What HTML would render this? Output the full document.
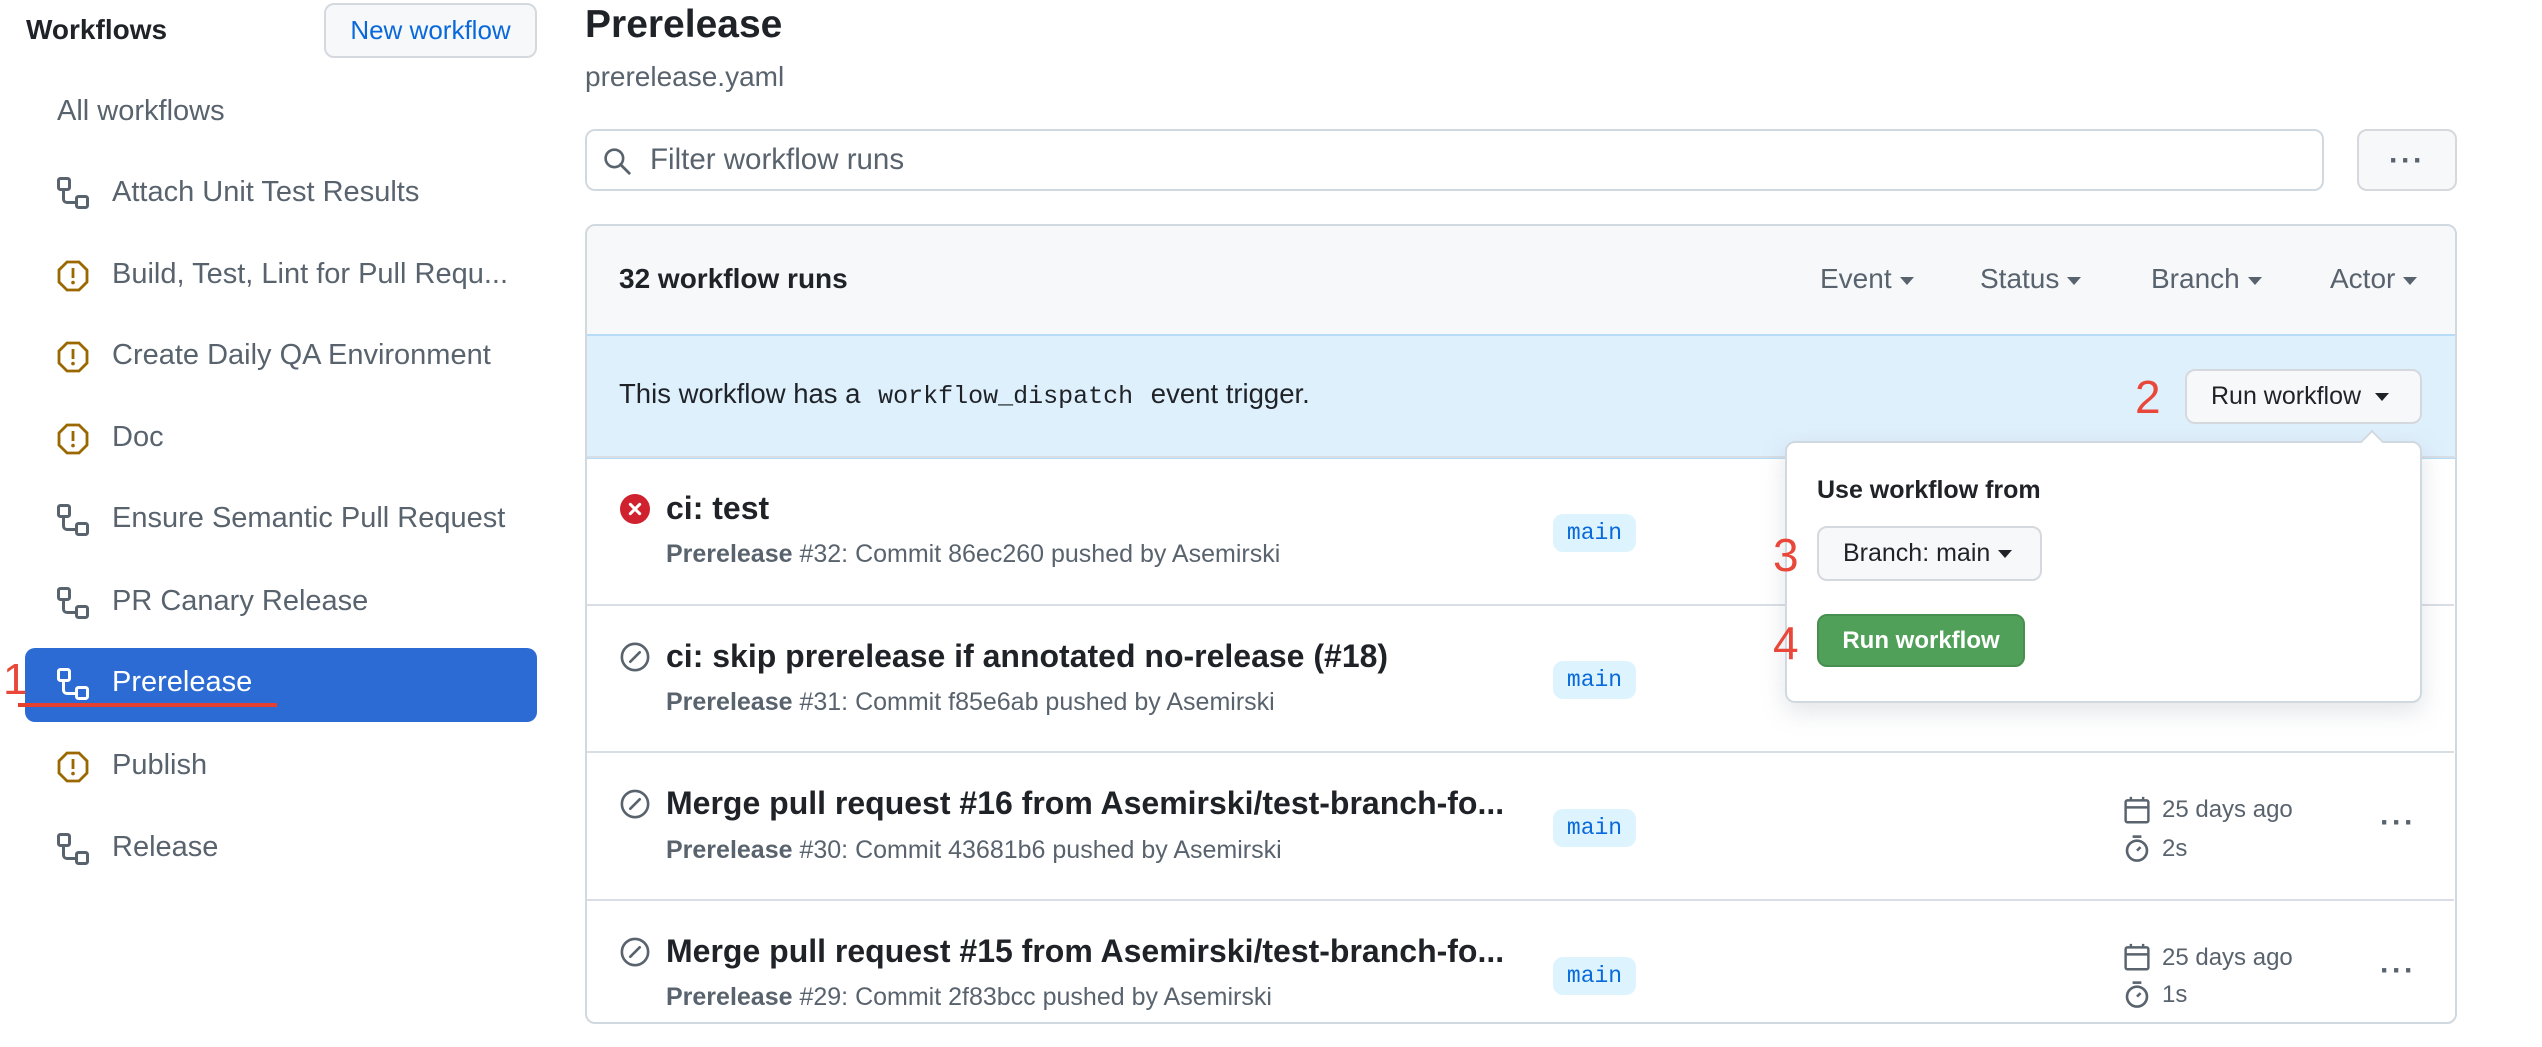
<!DOCTYPE html>
<html><head><meta charset="utf-8"><style>
*{box-sizing:border-box;margin:0;padding:0}
body{width:2542px;height:1002px;overflow:hidden;background:#fff;font-family:"Liberation Sans",Arial,sans-serif;color:#1f2328;position:relative}
.a{position:absolute;white-space:nowrap}
.side{font-size:29px;color:#59636e}
.ic{position:absolute;width:32px;height:32px}
.btn{position:absolute;border:2px solid #d5d9de;border-radius:10px;background:#f6f8fa}
.caret{display:inline-block;width:0;height:0;border-left:7px solid transparent;border-right:7px solid transparent;border-top:8px solid #59636e;vertical-align:middle;margin-left:8px}
.row{position:absolute;left:587px;width:1867px;height:148px;border-top:2px solid #d8dee4}
.t{font-size:32px;font-weight:bold;color:#1f2328}
.s{font-size:25px;color:#59636e}
.badge{position:absolute;left:1553px;width:83px;height:38px;background:#ddf4ff;border-radius:10px;color:#0969da;font-family:"Liberation Mono",monospace;font-size:23px;text-align:center;line-height:38px}
.meta{font-size:24px;color:#59636e}
.num{position:absolute;color:#e8473a;font-size:46px;font-family:"Liberation Sans",sans-serif}
.dots{position:absolute;font-size:30px;color:#59636e;letter-spacing:2px;font-weight:bold}
</style></head><body>
<svg width="0" height="0" style="position:absolute"><defs>
<path id="wf" d="M0 1.750C0 .784.784 0 1.75 0h3.5C6.216 0 7 .784 7 1.75v3.5A1.75 1.75 0 0 1 5.25 7H4v4a1 1 0 0 0 1 1h4v-1.25C9 9.784 9.784 9 10.75 9h3.5c.966 0 1.75.784 1.75 1.75v3.5A1.75 1.75 0 0 1 14.25 16h-3.5A1.75 1.75 0 0 1 9 14.25v-.75H5A2.5 2.5 0 0 1 2.5 11V7h-.75A1.75 1.75 0 0 1 0 5.25Zm1.75-.25a.25.25 0 0 0-.25.25v3.5c0 .138.112.25.25.25h3.5a.25.25 0 0 0 .25-.25v-3.5a.25.25 0 0 0-.25-.25Zm9 9a.25.25 0 0 0-.25.25v3.5c0 .138.112.25.25.25h3.5a.25.25 0 0 0 .25-.25v-3.5a.25.25 0 0 0-.25-.25Z"/>
</defs></svg>

<div class="a" style="left:26px;top:14px;font-size:28px;font-weight:bold">Workflows</div>
<div class="btn" style="left:324px;top:3px;width:213px;height:55px;color:#0969da;font-size:26px;text-align:center;line-height:51px">New workflow</div>
<div class="a side" style="left:57px;top:95px">All workflows</div>

<svg class="ic" style="left:57px;top:177px" viewBox="0 0 16 16" fill="#59636e"><use href="#wf"/></svg>
<div class="a side" style="left:112px;top:176px">Attach Unit Test Results</div>

<svg class="ic" style="left:57px;top:260px" viewBox="0 0 16 16"><polygon points="5,1 11,1 15,5 15,11 11,15 5,15 1,11 1,5" fill="none" stroke="#9a6700" stroke-width="1.4"/><rect x="7.3" y="4" width="1.4" height="5" fill="#9a6700"/><circle cx="8" cy="11.3" r=".9" fill="#9a6700"/></svg>
<div class="a side" style="left:112px;top:258px">Build, Test, Lint for Pull Requ...</div>

<svg class="ic" style="left:57px;top:341px" viewBox="0 0 16 16"><polygon points="5,1 11,1 15,5 15,11 11,15 5,15 1,11 1,5" fill="none" stroke="#9a6700" stroke-width="1.4"/><rect x="7.3" y="4" width="1.4" height="5" fill="#9a6700"/><circle cx="8" cy="11.3" r=".9" fill="#9a6700"/></svg>
<div class="a side" style="left:112px;top:339px">Create Daily QA Environment</div>

<svg class="ic" style="left:57px;top:423px" viewBox="0 0 16 16"><polygon points="5,1 11,1 15,5 15,11 11,15 5,15 1,11 1,5" fill="none" stroke="#9a6700" stroke-width="1.4"/><rect x="7.3" y="4" width="1.4" height="5" fill="#9a6700"/><circle cx="8" cy="11.3" r=".9" fill="#9a6700"/></svg>
<div class="a side" style="left:112px;top:421px">Doc</div>

<svg class="ic" style="left:57px;top:504px" viewBox="0 0 16 16" fill="#59636e"><use href="#wf"/></svg>
<div class="a side" style="left:112px;top:502px">Ensure Semantic Pull Request</div>

<svg class="ic" style="left:57px;top:587px" viewBox="0 0 16 16" fill="#59636e"><use href="#wf"/></svg>
<div class="a side" style="left:112px;top:585px">PR Canary Release</div>

<div class="a" style="left:25px;top:648px;width:512px;height:74px;background:#2b6bd3;border-radius:10px"></div>
<svg class="ic" style="left:57px;top:668px" viewBox="0 0 16 16" fill="#fff"><use href="#wf"/></svg>
<div class="a side" style="left:112px;top:666px;color:#fff">Prerelease</div>
<div class="a" style="left:18px;top:703px;width:259px;height:4px;background:#e5402f"></div>
<div class="num" style="left:3px;top:655px;font-size:44px">1</div>

<svg class="ic" style="left:57px;top:751px" viewBox="0 0 16 16"><polygon points="5,1 11,1 15,5 15,11 11,15 5,15 1,11 1,5" fill="none" stroke="#9a6700" stroke-width="1.4"/><rect x="7.3" y="4" width="1.4" height="5" fill="#9a6700"/><circle cx="8" cy="11.3" r=".9" fill="#9a6700"/></svg>
<div class="a side" style="left:112px;top:749px">Publish</div>

<svg class="ic" style="left:57px;top:833px" viewBox="0 0 16 16" fill="#59636e"><use href="#wf"/></svg>
<div class="a side" style="left:112px;top:831px">Release</div>

<div class="a" style="left:585px;top:3px;font-size:39px;font-weight:bold">Prerelease</div>
<div class="a" style="left:585px;top:61px;font-size:28px;color:#59636e">prerelease.yaml</div>

<div class="a" style="left:585px;top:129px;width:1739px;height:62px;border:2px solid #d1d9e0;border-radius:10px"></div>
<svg class="a" style="left:603px;top:147px" width="28" height="28" viewBox="0 0 16 16"><circle cx="6.5" cy="6.5" r="5" fill="none" stroke="#59636e" stroke-width="1.5"/><line x1="10" y1="10" x2="15" y2="15" stroke="#59636e" stroke-width="1.6" stroke-linecap="round"/></svg>
<div class="a" style="left:650px;top:143px;font-size:29.5px;color:#59636e">Filter workflow runs</div>
<div class="btn" style="left:2357px;top:129px;width:100px;height:62px"></div>
<div class="dots" style="left:2389px;top:144px">···</div>

<div class="a" style="left:585px;top:224px;width:1872px;height:800px;border:2px solid #d1d9e0;border-radius:10px;overflow:hidden">
 <div style="position:absolute;left:0;top:0;width:100%;height:108px;background:#f6f8fa"></div>
 <div style="position:absolute;left:0;top:108px;width:100%;height:125px;background:#dff0fd;border-top:2px solid #b6dcf8;border-bottom:2px solid #b6dcf8"></div>
</div>
<div class="a" style="left:619px;top:263px;font-size:28px;font-weight:bold">32 workflow runs</div>
<div class="a" style="left:1820px;top:263px;font-size:28px;color:#59636e">Event<span class="caret"></span></div>
<div class="a" style="left:1980px;top:263px;font-size:28px;color:#59636e">Status<span class="caret"></span></div>
<div class="a" style="left:2151px;top:263px;font-size:28px;color:#59636e">Branch<span class="caret"></span></div>
<div class="a" style="left:2330px;top:263px;font-size:28px;color:#59636e">Actor<span class="caret"></span></div>

<div class="a" style="left:619px;top:378px;font-size:27.5px">This workflow has a <span style="font-family:'Liberation Mono',monospace;font-size:25px;padding:0 10px">workflow_dispatch</span> event trigger.</div>
<div class="num" style="left:2135px;top:370px">2</div>
<div class="btn" style="left:2185px;top:369px;width:237px;height:55px;font-size:25px;line-height:51px;padding-left:24px">Run workflow<span class="caret" style="margin-left:14px;border-top-color:#1f2328"></span></div>

<div class="row" style="top:456px"></div>
<div class="row" style="top:604px"></div>
<div class="row" style="top:751px"></div>
<div class="row" style="top:899px"></div>

<svg class="a" style="left:620px;top:494px" width="30" height="30" viewBox="0 0 16 16"><circle cx="8" cy="8" r="8" fill="#cf222e"/><path d="M5.5 5.5l5 5M10.5 5.5l-5 5" stroke="#fff" stroke-width="1.6" stroke-linecap="round"/></svg>
<div class="a t" style="left:666px;top:490px">ci: test</div>
<div class="a s" style="left:666px;top:540px"><b>Prerelease</b> #32: Commit 86ec260 pushed by Asemirski</div>
<div class="badge" style="top:514px">main</div>

<svg class="a" style="left:620px;top:642px" width="30" height="30" viewBox="0 0 16 16"><circle cx="8" cy="8" r="7" fill="none" stroke="#59636e" stroke-width="1.4"/><line x1="5.5" y1="10.5" x2="10.5" y2="5.5" stroke="#59636e" stroke-width="1.4" stroke-linecap="round"/></svg>
<div class="a t" style="left:666px;top:638px">ci: skip prerelease if annotated no-release (#18)</div>
<div class="a s" style="left:666px;top:688px"><b>Prerelease</b> #31: Commit f85e6ab pushed by Asemirski</div>
<div class="badge" style="top:661px">main</div>

<svg class="a" style="left:620px;top:789px" width="30" height="30" viewBox="0 0 16 16"><circle cx="8" cy="8" r="7" fill="none" stroke="#59636e" stroke-width="1.4"/><line x1="5.5" y1="10.5" x2="10.5" y2="5.5" stroke="#59636e" stroke-width="1.4" stroke-linecap="round"/></svg>
<div class="a t" style="left:666px;top:785px">Merge pull request #16 from Asemirski/test-branch-fo...</div>
<div class="a s" style="left:666px;top:836px"><b>Prerelease</b> #30: Commit 43681b6 pushed by Asemirski</div>
<div class="badge" style="top:809px">main</div>

<svg class="a" style="left:620px;top:937px" width="30" height="30" viewBox="0 0 16 16"><circle cx="8" cy="8" r="7" fill="none" stroke="#59636e" stroke-width="1.4"/><line x1="5.5" y1="10.5" x2="10.5" y2="5.5" stroke="#59636e" stroke-width="1.4" stroke-linecap="round"/></svg>
<div class="a t" style="left:666px;top:933px">Merge pull request #15 from Asemirski/test-branch-fo...</div>
<div class="a s" style="left:666px;top:983px"><b>Prerelease</b> #29: Commit 2f83bcc pushed by Asemirski</div>
<div class="badge" style="top:957px">main</div>

<svg class="a" style="left:2123px;top:796px" width="28" height="28" viewBox="0 0 16 16"><rect x="1.5" y="2.5" width="13" height="12.5" rx="1" fill="none" stroke="#59636e" stroke-width="1.4"/><line x1="1.5" y1="6.5" x2="14.5" y2="6.5" stroke="#59636e" stroke-width="1.4"/><line x1="4.5" y1="0.5" x2="4.5" y2="3" stroke="#59636e" stroke-width="1.4"/><line x1="11.5" y1="0.5" x2="11.5" y2="3" stroke="#59636e" stroke-width="1.4"/></svg>
<div class="a meta" style="left:2162px;top:796px">25 days ago</div>
<svg class="a" style="left:2123px;top:834px" width="28" height="28" viewBox="0 0 16 16"><circle cx="8" cy="9.5" r="5.7" fill="none" stroke="#59636e" stroke-width="1.5"/><line x1="5.5" y1="1.5" x2="10.5" y2="1.5" stroke="#59636e" stroke-width="1.5"/><line x1="8" y1="9.5" x2="10" y2="7.5" stroke="#59636e" stroke-width="1.5"/></svg>
<div class="a meta" style="left:2162px;top:835px">2s</div>
<div class="dots" style="left:2380px;top:806px">···</div>

<svg class="a" style="left:2123px;top:943px" width="28" height="28" viewBox="0 0 16 16"><rect x="1.5" y="2.5" width="13" height="12.5" rx="1" fill="none" stroke="#59636e" stroke-width="1.4"/><line x1="1.5" y1="6.5" x2="14.5" y2="6.5" stroke="#59636e" stroke-width="1.4"/><line x1="4.5" y1="0.5" x2="4.5" y2="3" stroke="#59636e" stroke-width="1.4"/><line x1="11.5" y1="0.5" x2="11.5" y2="3" stroke="#59636e" stroke-width="1.4"/></svg>
<div class="a meta" style="left:2162px;top:944px">25 days ago</div>
<svg class="a" style="left:2123px;top:980px" width="28" height="28" viewBox="0 0 16 16"><circle cx="8" cy="9.5" r="5.7" fill="none" stroke="#59636e" stroke-width="1.5"/><line x1="5.5" y1="1.5" x2="10.5" y2="1.5" stroke="#59636e" stroke-width="1.5"/><line x1="8" y1="9.5" x2="10" y2="7.5" stroke="#59636e" stroke-width="1.5"/></svg>
<div class="a meta" style="left:2162px;top:981px">1s</div>
<div class="dots" style="left:2380px;top:954px">···</div>

<!-- popover -->
<div class="a" style="left:1785px;top:441px;width:637px;height:262px;background:#fff;border:2px solid #d1d9e0;border-radius:10px;box-shadow:0 8px 24px rgba(140,149,159,.25)"></div>
<div class="a" style="left:2364px;top:433px;width:16px;height:16px;background:#fff;border-left:2px solid #d1d9e0;border-top:2px solid #d1d9e0;transform:rotate(45deg)"></div>
<div class="a" style="left:1817px;top:476px;font-size:25px;font-weight:bold">Use workflow from</div>
<div class="num" style="left:1773px;top:528px">3</div>
<div class="btn" style="left:1817px;top:526px;width:225px;height:55px;font-size:25px;line-height:51px;padding-left:24px">Branch: main<span class="caret" style="border-top-color:#1f2328"></span></div>
<div class="num" style="left:1773px;top:616px">4</div>
<div class="a" style="left:1817px;top:614px;width:208px;height:53px;background:#51a059;border:2px solid #468f4e;border-radius:10px;color:#fff;font-size:24px;font-weight:bold;text-align:center;line-height:49px">Run workflow</div>
</body></html>
